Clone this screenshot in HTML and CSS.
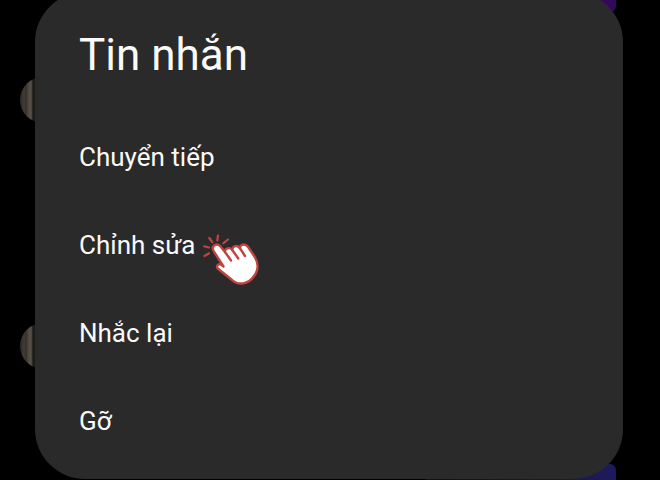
FILE: index.html
```html
<!DOCTYPE html>
<html lang="vi">
<head>
    <meta charset="UTF-8">
    <meta name="viewport" content="width=device-width, initial-scale=1.0">
    <title>Tin nhắn</title>
    <link rel="stylesheet" href="styles.css">
</head>
<body>
    <!-- chat behind the dialog -->
    <div class="chat" aria-hidden="true">
        <div class="avatar avatar-first"></div>
        <div class="avatar avatar-second"></div>
        <div class="bubble bubble-top"></div>
        <div class="bubble bubble-bottom"></div>
    </div>

    <main class="dialog" role="dialog" aria-labelledby="dialog-title">
        <h1 class="dialog-title" id="dialog-title">Tin nhắn</h1>
        <div class="menu">
            <button type="button" class="menu-item">Chuyển tiếp</button>
            <button type="button" class="menu-item">
                Chỉnh sửa
                <svg class="pointer" viewBox="0 0 56 54" aria-hidden="true">
                    <g fill="none" stroke="#c24440" stroke-width="2.2" stroke-linecap="round">
                        <path d="M1.500 23 6 20.300"/>
                        <path d="M1.200 13.300 6 14.500"/>
                        <path d="M6.300 5 9.300 9.200"/>
                        <path d="M15 2.700 14.300 7.500"/>
                        <path d="M25 6.500 20.300 10.300"/>
                    </g>
                    <path fill="#fff" stroke="#c24440" stroke-width="2.400" stroke-linejoin="round" d="M20.500 33.500 10.800 18.300C7.500 13 13.500 9.200 17.300 13.200L22 19C21.500 15.500 26.500 13.500 29.300 17 29.300 13 34 11.500 36.800 15 37.200 11.300 42 10 44.800 13.500L51.500 23.500C55.500 30 55.500 37.500 51 43 45.500 51.500 35 53 28.500 46.500L14.700 35.500C12.700 32.800 15.500 30.300 18.300 31.800Z"/>
                    <path fill="none" stroke="#c24440" stroke-width="2.400" stroke-linecap="round" d="M22 19 28 27.500M29.300 17 35.300 25.500M36.800 15 42 23"/>
                </svg>
            </button>
            <button type="button" class="menu-item">Nhắc lại</button>
            <button type="button" class="menu-item">Gỡ</button>
        </div>
    </main>
</body>
</html>
```

FILE: styles.css
```css
* {
    box-sizing: border-box;
}
body {
    margin: 0;
    background: #000;
    color: #fafafa;
    font-family: Roboto, "Noto Sans", sans-serif;
    overflow: hidden;
}
.chat {
    position: absolute;
    inset: 0;
    z-index: -1;
    overflow: hidden;
}
.avatar {
    position: absolute;
    left: 20px;
    width: 46px;
    height: 46px;
    border-radius: 50%;
    background: linear-gradient(90deg, #2b2723 0, #423c35 4px, #332f2a 6px, #4d463e 8px, #5a5248 11px, #1d1b19 13px, #1d1b19 100%);
}
.avatar-first {
    top: 77px;
}
.avatar-second {
    top: 323px;
}
.bubble {
    position: absolute;
    right: 44px;
    width: 190px;
    border-radius: 6px;
}
.bubble-top {
    top: -28px;
    height: 40px;
    background: #34095c;
}
.bubble-bottom {
    bottom: -24px;
    height: 40px;
    background: linear-gradient(90deg, #100c28, #1d1b5c);
}
.dialog {
    margin: -8px 37px 0 35px;
    padding: 35px 44px 14px;
    border-radius: 50px;
    background: #2a2a2a;
}
.dialog-title {
    margin: 0 0 30px;
    font-size: 44px;
    font-weight: 400;
    line-height: 56px;
}
.menu {
    display: flex;
    flex-direction: column;
}
.menu-item {
    display: flex;
    align-items: center;
    gap: 8px;
    height: 88px;
    padding: 0;
    border: 0;
    background: none;
    color: inherit;
    font: inherit;
    font-size: 26px;
    text-align: left;
    cursor: pointer;
}
.pointer {
    width: 56px;
    height: 54px;
    margin-top: 32px;
    align-self: flex-start;
}
```
